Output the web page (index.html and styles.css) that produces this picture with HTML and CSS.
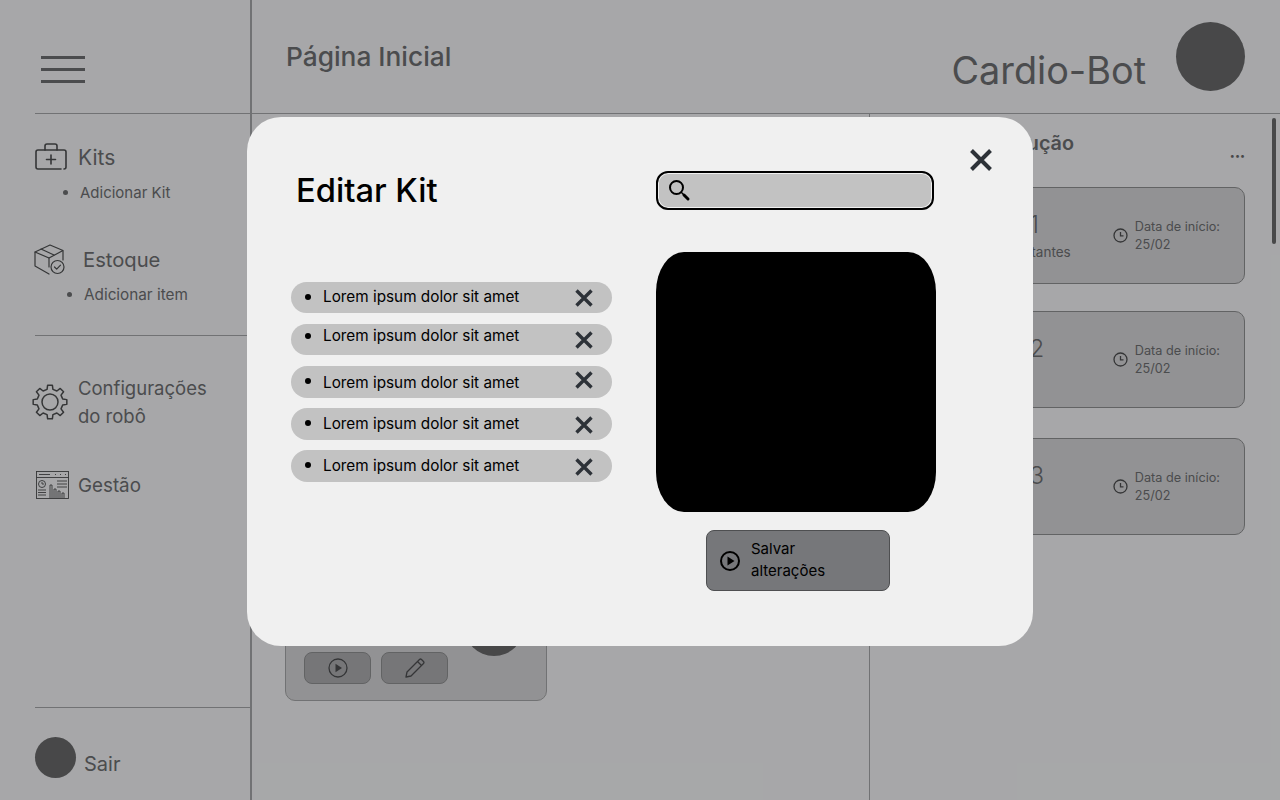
FILE: index.html
```html
<!DOCTYPE html>
<html lang="pt-BR">
<head>
  <meta charset="UTF-8">
  <title>Cardio-Bot</title>
  <link rel="stylesheet" href="styles.css">
</head>
<body>

<div class="app">
  <aside class="sidebar">
    <div class="menu-area">
      <div class="burger"><span></span><span></span><span></span></div>
    </div>

    <div class="nav-group nav-kits">
      <div class="nav-item">
        <svg class="icon-kit" width="32" height="28" viewBox="0 0 32 28" fill="none" stroke="#4c4d4f" stroke-width="1.6" stroke-linecap="round" stroke-linejoin="round">
          <path d="M26 26H3a2 2 0 0 1-2-2V9a2 2 0 0 1 2-2h26a2 2 0 0 1 2 2v15a2 2 0 0 1-2 2"/>
          <path d="M10 7V3a2 2 0 0 1 2-2h8a2 2 0 0 1 2 2v4M16 12v9M11.5 16.500h9"/>
        </svg>
        <span>Kits</span>
      </div>
      <ul class="sub-list"><li>Adicionar Kit</li></ul>
    </div>

    <div class="nav-group nav-stock">
      <div class="nav-item">
        <svg class="icon-box" width="31" height="31" viewBox="0 0 31 31" fill="none" stroke="#4c4d4f" stroke-width="1.2" stroke-linejoin="round" stroke-linecap="round">
          <path d="M1 8l15-7 13 5.500-14 7.500z"/>
          <path d="M1 8v14l14 8M15 14v9M29 7v9M7 5l13 6"/>
          <circle cx="23.500" cy="23" r="6.500"/>
          <path d="M20.500 23l2.200 2.200 3.800-4"/>
        </svg>
        <span>Estoque</span>
      </div>
      <ul class="sub-list"><li>Adicionar item</li></ul>
    </div>

    <div class="nav-divider"></div>

    <div class="nav-item nav-config">
      <svg width="36" height="36" viewBox="0 0 36 36" fill="none" stroke="#4c4d4f" stroke-width="1.500" stroke-linejoin="round">
        <path d="M15.070 5.330L15.630 1.170H20.370L20.930 5.330L24.890 6.980L28.230 4.420L31.580 7.770L29.020 11.110L30.670 15.070L34.830 15.630V20.370L30.670 20.930L29.020 24.890L31.580 28.230L28.230 31.580L24.890 29.020L20.930 30.670L20.370 34.830H15.630L15.070 30.670L11.110 29.020L7.770 31.580L4.420 28.230L6.980 24.890L5.330 20.930L1.170 20.370V15.630L5.330 15.070L6.980 11.110L4.420 7.770L7.770 4.420L11.110 6.980Z"/>
        <circle cx="18" cy="18" r="8"/>
      </svg>
      <span>Configurações<br>do robô</span>
    </div>

    <div class="nav-item nav-gestao">
      <svg width="33" height="28" viewBox="0 0 33 28" fill="none" stroke="#4c4d4f" stroke-width="0.900">
        <rect x="0.500" y="0.500" width="32" height="27"/>
        <path d="M0.500 6.500h32M3 3.500h11M19 3.500h1M24 3.500h1M29 3.500h1"/>
        <circle cx="6" cy="13" r="3.500"/>
        <path d="M6 11v2h2M2 19h8M2 21.500h8M2 24h8M21 10h10M21 13h10M21 16h10"/>
        <path d="M14 27V14h2v13M18 27V18h2v9M22 27V20h2v7M26 27V22h2v5"/>
      </svg>
      <span>Gestão</span>
    </div>

    <div class="logout">
      <div class="logout-avatar"></div>
      <span>Sair</span>
    </div>
  </aside>

  <div class="content">
    <header class="topbar">
      <h1 class="page-title">Página Inicial</h1>
      <div class="brand">
        <span class="brand-name">Cardio-Bot</span>
        <div class="brand-avatar"></div>
      </div>
    </header>

    <div class="panels">
      <section class="kits-panel">
        <div class="kit-card">
          <div class="kit-actions">
            <div class="kit-btn">
              <svg width="20" height="20" viewBox="0 0 20 20" fill="none" stroke="#4c4d4f" stroke-width="1.300">
                <circle cx="10" cy="10" r="9"/>
                <path d="M7.500 5.800l6.500 4.200-6.500 4.200z" fill="#4c4d4f" stroke="none"/>
              </svg>
            </div>
            <div class="kit-btn">
              <svg width="20" height="20" viewBox="0 0 20 20" fill="none" stroke="#4c4d4f" stroke-width="1.300" stroke-linejoin="round">
                <path d="M1 19l1-5L14.500 1.500a1.500 1.500 0 0 1 2 0l2 2a1.500 1.500 0 0 1 0 2L6 18z"/>
                <path d="M12.500 3.500l4 4"/>
              </svg>
            </div>
            <div class="kit-avatar"></div>
          </div>
        </div>
      </section>

      <section class="running-panel">
        <div class="running-head">
          <h2>Kits em execução</h2>
          <span class="more">•••</span>
        </div>

        <div class="run-card">
          <div class="run-info">
            <div class="run-name">Kit 1</div>
            <div class="run-sub">15 restantes</div>
          </div>
          <div class="run-date">
            <svg width="15" height="15" viewBox="0 0 15 15" fill="none" stroke="#4c4d4f" stroke-width="1.300"><circle cx="7.500" cy="7.500" r="6.500"/><path d="M7.500 4v3.800h3"/></svg>
            <span>Data de início:<br>25/02</span>
          </div>
        </div>

        <div class="run-card">
          <div class="run-info">
            <div class="run-name">Kit 2</div>
          </div>
          <div class="run-date">
            <svg width="15" height="15" viewBox="0 0 15 15" fill="none" stroke="#4c4d4f" stroke-width="1.300"><circle cx="7.500" cy="7.500" r="6.500"/><path d="M7.500 4v3.800h3"/></svg>
            <span>Data de início:<br>25/02</span>
          </div>
        </div>

        <div class="run-card run-card-last">
          <div class="run-info">
            <div class="run-name">Kit 3</div>
          </div>
          <div class="run-date">
            <svg width="15" height="15" viewBox="0 0 15 15" fill="none" stroke="#4c4d4f" stroke-width="1.300"><circle cx="7.500" cy="7.500" r="6.500"/><path d="M7.500 4v3.800h3"/></svg>
            <span>Data de início:<br>25/02</span>
          </div>
        </div>

        <div class="scroll-thumb"></div>
      </section>
    </div>
  </div>
</div>

<div class="scrim"></div>

<div class="modal">
  <button class="modal-close" aria-label="Fechar">
    <svg width="24" height="24" viewBox="0 0 24 24" fill="none" stroke="#2d3238" stroke-width="4"><path d="M2.500 2.500l19 19M21.500 2.500l-19 19"/></svg>
  </button>

  <div class="modal-left">
    <h2 class="modal-title">Editar Kit</h2>
    <div class="item-list">
      <div class="item"><span class="item-text">Lorem ipsum dolor sit amet</span><svg class="item-x" width="18" height="18" viewBox="0 0 18 18"><path d="M1.500 1.500l15 15M16.500 1.500l-15 15"/></svg></div>
      <div class="item item-b"><span class="item-text">Lorem ipsum dolor sit amet</span><svg class="item-x" width="18" height="18" viewBox="0 0 18 18"><path d="M1.500 1.500l15 15M16.500 1.500l-15 15"/></svg></div>
      <div class="item item-c"><span class="item-text">Lorem ipsum dolor sit amet</span><svg class="item-x" width="18" height="18" viewBox="0 0 18 18"><path d="M1.500 1.500l15 15M16.500 1.500l-15 15"/></svg></div>
      <div class="item item-d"><span class="item-text">Lorem ipsum dolor sit amet</span><svg class="item-x" width="18" height="18" viewBox="0 0 18 18"><path d="M1.500 1.500l15 15M16.500 1.500l-15 15"/></svg></div>
      <div class="item item-d"><span class="item-text">Lorem ipsum dolor sit amet</span><svg class="item-x" width="18" height="18" viewBox="0 0 18 18"><path d="M1.500 1.500l15 15M16.500 1.500l-15 15"/></svg></div>
    </div>
  </div>

  <div class="modal-right">
    <div class="search">
      <svg width="24" height="24" viewBox="0 0 24 24" fill="none" stroke="#000" stroke-linecap="round">
        <circle cx="9.500" cy="9.500" r="6.500" stroke-width="2"/>
        <path d="M14.500 14.500l2 2" stroke-width="1.500"/>
        <path d="M17 17l4 4" stroke-width="3"/>
      </svg>
    </div>
    <div class="kit-image"></div>
    <button class="save-btn">
      <svg width="22" height="22" viewBox="0 0 22 22" fill="none" stroke="#000" stroke-width="2">
        <circle cx="11" cy="11" r="9"/>
        <path d="M8.500 6.500l7 4.500-7 4.500z" fill="#000" stroke="none"/>
      </svg>
      <span>Salvar<br>alterações</span>
    </button>
  </div>
</div>

</body>
</html>
```

FILE: styles.css
```css
* {
  box-sizing: border-box;
}
body {
  margin: 0;
  height: 800px;
  overflow: hidden;
  position: relative;
  font-family: "Inter", "Noto Sans", sans-serif;
  background: #eff0f2;
  color: #6c6d70;
}
h1, h2 {
  margin: 0;
}
.app {
  display: flex;
  height: 800px;
}

/* sidebar */
.sidebar {
  width: 252px;
  flex: none;
  border-right: 2px solid #a3a4a6;
  display: flex;
  flex-direction: column;
}
.menu-area {
  height: 114px;
  margin-left: 35px;
  border-bottom: 1px solid #a3a4a6;
  padding: 56px 0 0 6px;
}
.burger span {
  display: block;
  width: 44px;
  height: 3px;
  background: #6c6d70;
  margin-bottom: 9px;
}
.nav-item {
  display: flex;
  align-items: center;
  font-size: 21px;
}
.nav-kits {
  margin: 29px 0 0 35px;
}
.nav-kits .nav-item {
  gap: 11px;
}
.nav-stock {
  margin: 42px 0 0 34px;
}
.nav-stock .nav-item {
  gap: 18px;
  font-size: 20.200px;
}
.sub-list {
  margin: 12px 0 0;
  padding-left: 45px;
  font-size: 15px;
}
.nav-stock .sub-list {
  margin-top: 10px;
  padding-left: 50px;
  font-size: 15.300px;
}
.nav-divider {
  margin: 31px 0 0 35px;
  border-top: 1px solid #a3a4a6;
}
.nav-config {
  margin: 38px 0 0 32px;
  gap: 10px;
  font-size: 18.500px;
  line-height: 28px;
}
.nav-gestao {
  margin: 41px 0 0 36px;
  gap: 9px;
  font-size: 18.800px;
}
.logout {
  margin: auto 0 0 35px;
  border-top: 1px solid #a3a4a6;
  height: 93px;
  padding-top: 29px;
  display: flex;
  gap: 8px;
  font-size: 20px;
}
.logout span {
  padding-top: 15px;
}
.logout-avatar {
  width: 41px;
  height: 41px;
  border-radius: 50%;
  background: #676769;
}

/* top */
.content {
  flex: 1;
  display: flex;
  flex-direction: column;
  min-width: 0;
}
.topbar {
  height: 114px;
  border-bottom: 1px solid #a3a4a6;
  display: flex;
  justify-content: space-between;
  padding: 0 35px 0 34px;
}
.page-title {
  font-size: 26.300px;
  font-weight: 500;
  margin-top: 41px;
  line-height: 32px;
}
.brand {
  display: flex;
  gap: 30px;
  padding-top: 22px;
}
.brand-name {
  font-size: 37.800px;
  line-height: 44px;
  margin-top: 26px;
}
.brand-avatar {
  width: 69px;
  height: 69px;
  border-radius: 50%;
  background: #676769;
}
.panels {
  flex: 1;
  display: flex;
  min-height: 0;
}

/* kits */
.kits-panel {
  width: 618px;
  flex: none;
  border-right: 1px solid #a3a4a6;
  padding: 30px 0 99px 33px;
}
.kit-card {
  width: 262px;
  height: 100%;
  background: #d2d2d4;
  border: 1px solid #a3a4a6;
  border-radius: 10px;
  display: flex;
  flex-direction: column;
  justify-content: flex-end;
  padding: 0 18px 16px;
}
.kit-actions {
  display: flex;
  gap: 10px;
  position: relative;
}
.kit-btn {
  width: 67px;
  height: 32px;
  background: #a9aaad;
  border: 1px solid #8d8e90;
  border-radius: 8px;
  display: flex;
  align-items: center;
  justify-content: center;
}
.kit-avatar {
  position: absolute;
  right: 4px;
  bottom: 28px;
  width: 60px;
  height: 60px;
  border-radius: 50%;
  background: #676769;
}

/* em execucao */
.running-panel {
  flex: 1;
  position: relative;
  padding: 16px 35px 0 35px;
}
.running-head {
  display: flex;
  justify-content: space-between;
  height: 57px;
}
.running-head h2 {
  font-size: 19.800px;
  font-weight: 600;
  line-height: 26px;
}
.more {
  font-size: 9px;
  line-height: 16px;
  padding-top: 18px;
  color: #676769;
}
.run-card {
  height: 97px;
  margin-bottom: 27px;
  background: #d2d2d4;
  border: 1px solid #8d8e90;
  border-radius: 10px;
  display: flex;
  justify-content: space-between;
  padding: 0 24px 0 88px;
}
.run-card-last {
  margin-top: 30px;
}
.run-name {
  font-size: 24px;
  line-height: 30px;
  margin-top: 22px;
  font-weight: 300;
}
.run-sub {
  font-size: 13.500px;
  line-height: 18px;
  margin-top: 3px;
}
.run-date {
  display: flex;
  align-items: center;
  gap: 7px;
  font-size: 12.700px;
  line-height: 18px;
}
.scroll-thumb {
  position: absolute;
  top: 4px;
  right: 4px;
  width: 4px;
  height: 126px;
  border-radius: 2px;
  background: #676769;
}

/* modal */
.scrim {
  position: absolute;
  top: 0;
  left: 0;
  right: 0;
  bottom: 0;
  background: rgba(0, 0, 0, 0.3);
}
.modal {
  position: absolute;
  left: 247px;
  top: 117px;
  width: 786px;
  height: 529px;
  background: #f0f0f0;
  border-radius: 34px;
  padding: 54px 0 0 44px;
  display: grid;
  grid-template-columns: 321px 280px;
  column-gap: 44px;
  align-content: start;
  color: #000;
}
.modal-close {
  position: absolute;
  top: 31px;
  right: 40px;
  width: 24px;
  height: 24px;
  padding: 0;
  border: none;
  background: none;
}
.modal-title {
  font-size: 32.700px;
  font-weight: 500;
  line-height: 39px;
  margin: 0 0 72px 5px;
}
.item-list {
  display: flex;
  flex-direction: column;
  gap: 11px;
}
.item {
  height: 31px;
  border-radius: 16px;
  background: #c2c2c2;
  display: flex;
  align-items: center;
  justify-content: space-between;
  padding: 0 19px 0 32px;
  font-size: 15.300px;
  position: relative;
}
.item::before {
  content: "";
  position: absolute;
  left: 14px;
  top: 12px;
  width: 6px;
  height: 6px;
  border-radius: 50%;
  background: #000;
}
.item .item-text {
  margin-bottom: 2px;
}
.item-x {
  fill: none;
  stroke: #2d3238;
  stroke-width: 3.400;
}
.item-list .item-b .item-text {
  margin-bottom: 9px;
}
.item-b::before {
  top: 9px;
}
.item-c,
.item-d {
  height: 32px;
}
.item-list .item-d {
  margin-top: -1px;
}
.item-list .item-c .item-text {
  margin-bottom: 0;
}
.item-c .item-x {
  margin-bottom: 4px;
}
.item-list .item-d .item-text {
  margin-bottom: 2px;
}
.item-d .item-x {
  margin-top: 2px;
}
.search {
  width: 278px;
  height: 39px;
  border: 2px solid #000;
  border-radius: 12px;
  background: #c2c2c2;
  box-shadow: inset 0 0 0 1px #f0f0f0;
  padding: 5px 0 0 9px;
  margin-bottom: 42px;
}
.search svg {
  display: block;
}
.kit-image {
  height: 260px;
  background: #000;
  border-radius: 28px / 40px;
}
.save-btn {
  margin: 18px 0 0 50px;
  width: 184px;
  height: 61px;
  background: #76777a;
  border: 1px solid #4e4f51;
  border-radius: 8px;
  display: flex;
  align-items: center;
  gap: 10px;
  padding: 0 0 2px 12px;
  font: inherit;
  font-size: 15px;
  line-height: 22px;
  text-align: left;
  color: #000;
}
.save-btn svg {
  margin-top: 2px;
}
```
